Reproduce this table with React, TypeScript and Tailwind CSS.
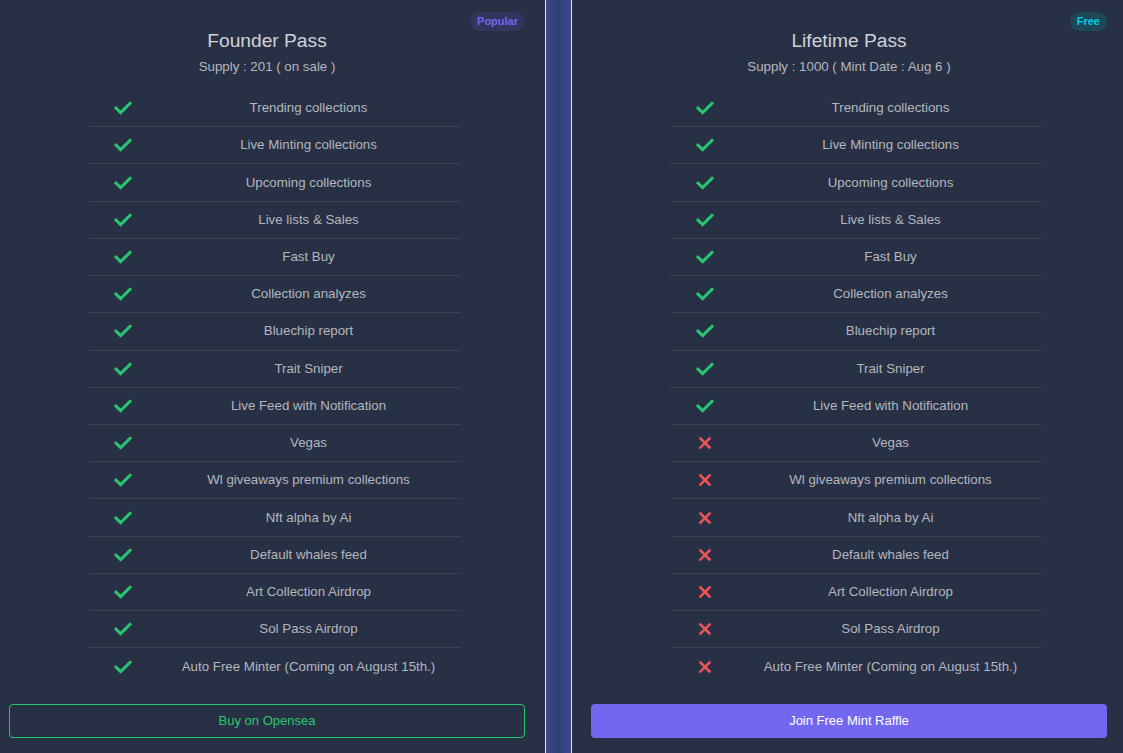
import React from "react";

const features = [
  "Trending collections",
  "Live Minting collections",
  "Upcoming collections",
  "Live lists & Sales",
  "Fast Buy",
  "Collection analyzes",
  "Bluechip report",
  "Trait Sniper",
  "Live Feed with Notification",
  "Vegas",
  "Wl giveaways premium collections",
  "Nft alpha by Ai",
  "Default whales feed",
  "Art Collection Airdrop",
  "Sol Pass Airdrop",
  "Auto Free Minter (Coming on August 15th.)",
];

function Check() {
  return (
    <svg width="18" height="14" viewBox="0 0 18 14" fill="none">
      <path d="M2 7.2 L6.6 11.6 L16 2.4" stroke="#28c76f" strokeWidth="3" strokeLinecap="square" />
    </svg>
  );
}

function Cross() {
  return (
    <svg width="14" height="14" viewBox="0 0 14 14" fill="none">
      <path d="M2.5 2.5 L11.5 11.5 M11.5 2.5 L2.5 11.5" stroke="#ea5455" strokeWidth="2.6" strokeLinecap="square" />
    </svg>
  );
}

function Card({
  title,
  supply,
  badge,
  badgeClass,
  included,
  button,
}: {
  title: string;
  supply: string;
  badge: string;
  badgeClass: string;
  included: number;
  button: React.ReactNode;
}) {
  return (
    <div className="relative w-[534px] h-full flex flex-col px-[9px] pt-[28px] pb-[15px]">
      <span
        className={`absolute top-[12px] right-[9px] h-[19px] px-[7px] rounded-full flex items-center text-[11px] font-bold ${badgeClass}`}
      >
        {badge}
      </span>
      <div className="text-center text-[19.2px] leading-[26px] text-[#d0d2d6]">{title}</div>
      <div className="text-center text-[13.3px] leading-[20px] mt-[3px] text-[#b4b7bd]">{supply}</div>
      <div className="ml-[80px] w-[371px] mt-[13px]">
        {features.map((f, i) => (
          <div
            key={f}
            className={`flex items-center h-[37.22px] ${i < features.length - 1 ? "border-b border-[#3b4253]" : ""}`}
          >
            <div className="w-[68px] flex justify-center">{i < included ? <Check /> : <Cross />}</div>
            <div className="flex-1 text-center text-[13.3px] text-[#b4b7bd]">{f}</div>
          </div>
        ))}
      </div>
      <div className="mt-auto">{button}</div>
    </div>
  );
}

export default function App() {
  return (
    <div
      className="w-[1123px] h-[753px] bg-[#283046] flex overflow-hidden"
      style={{ fontFamily: '"Liberation Sans", Arial, sans-serif' }}
    >
      <Card
        title="Founder Pass"
        supply="Supply : 201 ( on sale )"
        badge="Popular"
        badgeClass="bg-[#33355e] text-[#7367f0]"
        included={16}
        button={
          <button className="w-full h-[34px] rounded-[4px] border border-[#28c76f] text-[#28c76f] text-[13px]">
            Buy on Opensea
          </button>
        }
      />
      <div className="ml-[11px] w-[27px] h-full flex">
        <div className="w-px h-full bg-[#e4e2ff]" />
        <div className="flex-1 h-full bg-gradient-to-r from-[#3e4890] via-[#2d3f74] to-[#3e4890]" />
        <div className="w-px h-full bg-[#e4e2ff]" />
      </div>
      <div className="ml-[10px]">
        <Card
          title="Lifetime Pass"
          supply="Supply : 1000 ( Mint Date : Aug 6 )"
          badge="Free"
          badgeClass="bg-[#1e4858] text-[#00cfe8]"
          included={9}
          button={
            <button className="w-full h-[34px] rounded-[4px] bg-[#7367f0] text-white text-[13px]">
              Join Free Mint Raffle
            </button>
          }
        />
      </div>
    </div>
  );
}
